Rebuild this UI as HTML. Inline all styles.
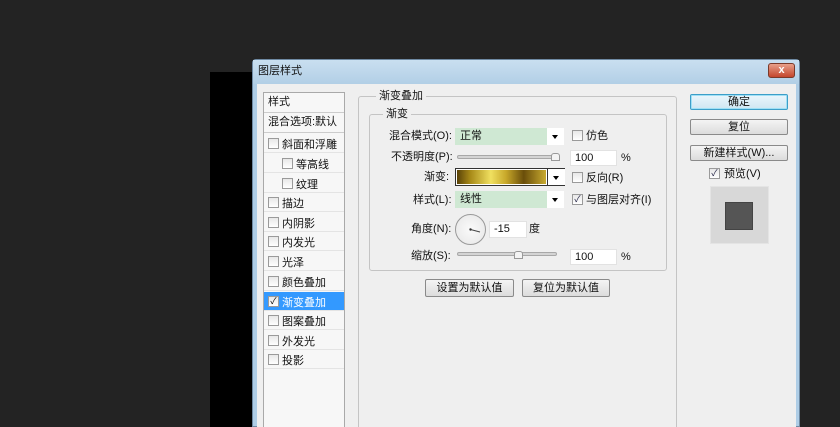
<!DOCTYPE html>
<html><head><meta charset="utf-8"><style>
*{margin:0;padding:0;box-sizing:border-box}
html,body{width:840px;height:427px;overflow:hidden}
body{background:#232323;position:relative;font-family:"Liberation Sans","Noto Sans CJK SC",sans-serif;font-size:11px;color:#111}
.a{position:absolute}
.t{position:absolute;white-space:nowrap;line-height:14px}
.cb{position:absolute;width:11px;height:11px;border:1px solid #9a9a9a;background:linear-gradient(#e8e8e8,#fff)}
.btn{position:absolute;border:1px solid #8a8a8a;border-radius:2px;background:linear-gradient(#f4f4f4,#dcdcdc);text-align:center;line-height:14px;font-size:11px}
.inp{position:absolute;background:#fff;border:1px solid #e2e2e2;font-size:11px;padding-left:4px;line-height:14px}
.sel{position:absolute;background:#cfe8d3;height:17px;font-size:11px;padding-left:5px;line-height:17px}
.arr{position:absolute;width:17px;height:17px;background:#fff}
.arr:after{content:"";position:absolute;left:5px;top:7px;border:3px solid transparent;border-top:4px solid #000}
.li{position:absolute;left:264px;width:80px;height:19px;border-bottom:1px solid #e4e4e4}
.li .cb{left:4px;top:4px}
.li span{position:absolute;left:18px;top:2px}
.sl{position:absolute;height:4px;border:1px solid #a8a8a8;border-radius:2px;background:#d4d4d4}
</style></head><body>
<div class="a" style="left:210px;top:72px;width:45px;height:355px;background:#000"></div>
<div class="a" style="left:252px;top:59px;width:548px;height:368px;background:#aecde6;border:1px solid #6f8aa3;border-radius:4px 4px 0 0"></div>
<div class="a" style="left:253px;top:60px;width:546px;height:24px;background:linear-gradient(#c9dff0,#b2cfe6)"></div>
<div class="t" style="left:258px;top:64px;font-size:11px">图层样式</div>
<div class="a" style="left:768px;top:63px;width:27px;height:15px;border:1px solid #7a3a2a;border-radius:3px;background:linear-gradient(#e8a08a,#c4452c);color:#fff;font-size:11px;text-align:center;line-height:13px;font-weight:bold">x</div>
<div class="a" style="left:257px;top:84px;width:539px;height:343px;background:#efefef"></div>
<div class="a" style="left:263px;top:92px;width:82px;height:340px;background:#f7f7f7;border:1px solid #a9a9a9"></div>
<div class="t" style="left:268px;top:95px">样式</div>
<div class="a" style="left:264px;top:112px;width:80px;height:1px;background:#ccc"></div>
<div class="t" style="left:268px;top:115px">混合选项:默认</div>
<div class="a" style="left:264px;top:132px;width:80px;height:1px;background:#ccc"></div>
<div class="li" style="top:134px"><div class="cb"></div><span>斜面和浮雕</span></div>
<div class="li" style="top:154px"><div class="cb" style="left:18px"></div><span style="left:32px">等高线</span></div>
<div class="li" style="top:174px"><div class="cb" style="left:18px"></div><span style="left:32px">纹理</span></div>
<div class="li" style="top:193px"><div class="cb"></div><span>描边</span></div>
<div class="li" style="top:213px"><div class="cb"></div><span>内阴影</span></div>
<div class="li" style="top:232px"><div class="cb"></div><span>内发光</span></div>
<div class="li" style="top:252px"><div class="cb"></div><span>光泽</span></div>
<div class="li" style="top:272px"><div class="cb"></div><span>颜色叠加</span></div>
<div class="li" style="top:292px;background:#3399ff;color:#fff"><div class="cb" style="font-size:9px;color:#000;line-height:9px;text-align:center">✓</div><span>渐变叠加</span></div>
<div class="li" style="top:311px"><div class="cb"></div><span>图案叠加</span></div>
<div class="li" style="top:331px"><div class="cb"></div><span>外发光</span></div>
<div class="li" style="top:350px"><div class="cb"></div><span>投影</span></div>
<div class="a" style="left:358px;top:96px;width:319px;height:340px;border:1px solid #c4c4c4;border-radius:3px"></div>
<div class="t" style="left:376px;top:89px;background:#efefef;padding:0 3px">渐变叠加</div>
<div class="a" style="left:369px;top:114px;width:298px;height:157px;border:1px solid #c4c4c4;border-radius:3px"></div>
<div class="t" style="left:383px;top:107px;background:#efefef;padding:0 3px">渐变</div>
<div class="t" style="left:389px;top:129px">混合模式(O):</div>
<div class="sel" style="left:455px;top:128px;width:92px">正常</div><div class="arr" style="left:547px;top:128px"></div>
<div class="cb" style="left:572px;top:130px"></div><div class="t" style="left:586px;top:129px">仿色</div>
<div class="t" style="left:391px;top:150px">不透明度(P):</div>
<div class="sl" style="left:457px;top:155px;width:100px"></div>
<div class="a" style="left:551px;top:153px;width:9px;height:8px;background:#f4f4f4;border:1px solid #999;border-radius:3px 3px 0 0"></div>
<div class="inp" style="left:570px;top:150px;width:47px;height:16px">100</div><div class="t" style="left:621px;top:151px">%</div>
<div class="t" style="left:424px;top:170px">渐变:</div>
<div class="a" style="left:455px;top:168px;width:110px;height:18px;border:1px solid #333;background:#fff"></div>
<div class="a" style="left:457px;top:170px;width:89px;height:14px;background:linear-gradient(90deg,#5a4208,#a88a18 15%,#f0e060 38%,#c8a82a 55%,#6a4e0a 75%,#c8aa30 100%)"></div>
<div class="a" style="left:547px;top:169px;width:1px;height:16px;background:#333"></div>
<div class="arr" style="left:548px;top:169px;height:16px"></div>
<div class="cb" style="left:572px;top:172px"></div><div class="t" style="left:586px;top:171px">反向(R)</div>
<div class="t" style="left:413px;top:193px">样式(L):</div>
<div class="sel" style="left:455px;top:191px;width:92px">线性</div><div class="arr" style="left:547px;top:191px"></div>
<div class="cb" style="left:572px;top:194px;font-size:9px;color:#224;line-height:9px;text-align:center">✓</div><div class="t" style="left:586px;top:193px">与图层对齐(I)</div>
<div class="t" style="left:411px;top:222px">角度(N):</div>
<div class="a" style="left:455px;top:214px;width:31px;height:31px;border-radius:50%;border:1px solid #999;background:radial-gradient(#fafafa,#e6e6e6)"></div>
<svg class="a" style="left:455px;top:214px" width="31" height="31"><line x1="15.5" y1="15.5" x2="25" y2="18" stroke="#444" stroke-width="1"/><circle cx="15.5" cy="15.5" r="1.2" fill="#333"/></svg>
<div class="inp" style="left:489px;top:221px;width:38px;height:17px">-15</div><div class="t" style="left:529px;top:222px">度</div>
<div class="t" style="left:411px;top:249px">缩放(S):</div>
<div class="sl" style="left:457px;top:252px;width:100px"></div>
<div class="a" style="left:514px;top:251px;width:9px;height:8px;background:#f4f4f4;border:1px solid #999;border-radius:3px 3px 0 0"></div>
<div class="inp" style="left:570px;top:249px;width:47px;height:16px">100</div><div class="t" style="left:621px;top:250px">%</div>
<div class="btn" style="left:425px;top:279px;width:89px;height:18px;line-height:16px">设置为默认值</div>
<div class="btn" style="left:522px;top:279px;width:88px;height:18px;line-height:16px">复位为默认值</div>
<div class="btn" style="left:690px;top:94px;width:98px;height:16px;border-color:#3c9ec8;box-shadow:inset 0 0 0 1px #9fe0f6;background:linear-gradient(#eaf6fc,#cfe6f2)">确定</div>
<div class="btn" style="left:690px;top:119px;width:98px;height:16px">复位</div>
<div class="btn" style="left:690px;top:145px;width:98px;height:16px">新建样式(W)...</div>
<div class="cb" style="left:709px;top:168px;font-size:9px;color:#224;line-height:9px;text-align:center">✓</div>
<div class="t" style="left:724px;top:167px">预览(V)</div>
<div class="a" style="left:710px;top:186px;width:59px;height:58px;background:#d8d8d8;border:1px solid #e4e4e4"></div>
<div class="a" style="left:725px;top:202px;width:28px;height:28px;background:#555;border:1px solid #444"></div>
</body></html>
